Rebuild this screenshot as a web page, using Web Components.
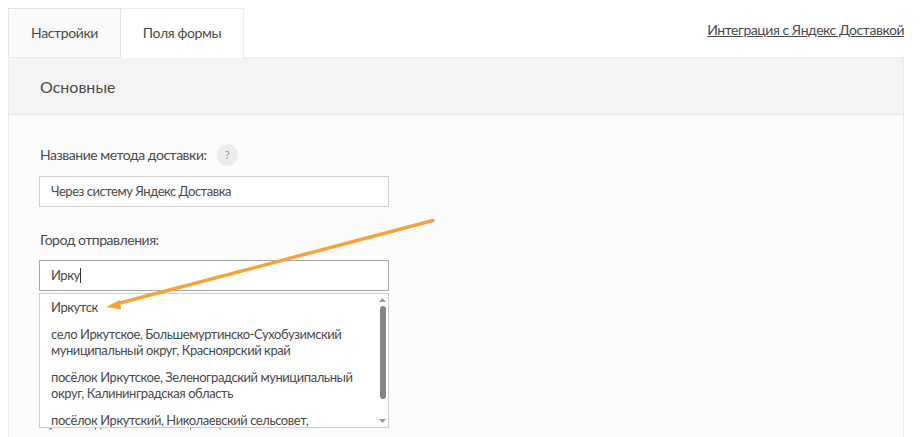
<!DOCTYPE html>
<html lang="ru"><head><meta charset="utf-8"><style>
html,body{margin:0;padding:0;background:#fff;overflow:hidden;height:437px}
body{font-family:Lato,"Noto Sans",sans-serif;color:#4a4a4a}
</style></head><body>
<template id="t-page"><style>
:host{display:block;position:relative;height:437px;overflow:hidden;box-sizing:border-box;padding:8px 20px 0 8px}
.top{display:flex;justify-content:space-between;align-items:flex-end;height:49px}
a{font-size:14px;letter-spacing:-.45px;color:#4a4a4a;text-decoration:underline;margin-bottom:17px;line-height:20px}
svg{position:absolute;left:0;top:0;pointer-events:none}
</style>
<div class="top"><slot name="tabs"></slot><a href="#">Интеграция с Яндекс Доставкой</a></div>
<slot></slot>
<svg width="924" height="437" viewBox="0 0 924 437"><path d="M433 220.500 L118 303.500" stroke="#f4a43b" stroke-width="3.400" stroke-linecap="round" fill="none"/><path d="M106 307 L120 300 L121 309.500 Z" fill="#f4a43b"/></svg>
</template>
<template id="t-tabs"><style>:host{display:flex;height:49px}</style><slot></slot></template>
<template id="t-tab"><style>
:host{display:flex;align-items:center;justify-content:center;box-sizing:border-box;height:50px;margin-bottom:-1px;padding-bottom:1px;font-size:14px;letter-spacing:-.38px;line-height:20px;border:1px solid #ededed;border-bottom:0;background:#fff;color:#4a4a4a;width:123px}
:host([active]){background:#fafafa;border-color:#e4e4e4;width:113px;padding-bottom:0;height:49px;margin-bottom:0}
:host(:not([active])){border-left:0}
</style><slot></slot></template>
<template id="t-panel"><style>
:host{display:block;box-sizing:border-box;height:380px;border:1px solid #ebebeb;border-bottom:0;background:#fcfcfc}
header{box-sizing:border-box;height:57px;background:#f4f4f4;border-bottom:1px solid #e8e8e8;padding:0 30px 0 31px;display:flex;align-items:center;font-size:16px;color:#4a4a4a}
.body{padding:29px 30px 0}
</style><header><slot name="title"></slot></header><div class="body"><slot></slot></div></template>
<template id="t-field"><style>
:host{display:block;width:350px;margin-bottom:23px}
label{display:flex;align-items:center;gap:10px;padding-left:1px;font-size:14px;letter-spacing:-.47px;line-height:20px;color:#4a4a4a;margin-bottom:10px}
.q{width:21px;height:22px;border-radius:50%;background:#ededed;color:#999;font-size:12px;display:flex;align-items:center;justify-content:center}
.box{box-sizing:border-box;height:31px;border:1px solid #d0d0d0;background:#fff;padding:0 11px;font-size:13px;letter-spacing:-.47px;line-height:29px;color:#4a4a4a;white-space:nowrap}
:host([focus]) .box{border-color:#a8a8a8}
.caret{display:inline-block;width:1px;height:15px;background:#333;vertical-align:-3px}
</style><label><span id="l"></span><span class="q" id="q">?</span></label><div class="box"><span id="v"></span><span class="caret" id="c"></span></div></template>
<template id="t-suggest"><style>
:host{display:block;position:relative;width:350px;height:135px;margin-top:-21px}
.frame{box-sizing:border-box;height:135px;border:1px solid #cfcfcf;background:#fff;overflow:hidden;position:relative}
.list{padding-right:12px}
.sb{position:absolute;right:0;top:0;bottom:0;width:17px}
.thumb{position:absolute;left:9px;top:12px;width:6px;height:93px;border-radius:3px;background:#868686}
.sb svg{position:absolute;left:8px}
.peek{position:absolute;left:0;top:135px}
</style><div class="frame"><div class="list"><slot></slot></div><div class="sb"><svg style="top:4px" width="7" height="4"><path d="M3.500 0L7 4H0Z" fill="#9a9a9a"/></svg><div class="thumb"></div><svg style="bottom:4px" width="7" height="4"><path d="M0 0H7L3.500 4Z" fill="#9a9a9a"/></svg></div></div>
<svg class="peek" width="200" height="3" fill="#666"><rect x="10.500" y="0" width="2" height="1.500"/><rect x="56" y="0" width="1" height="1.500"/><rect x="61.500" y="0" width="1" height="1.500"/><rect x="151" y="0" width="1" height="1.500"/><rect x="180.500" y="0" width="1" height="1.500"/></svg></template>
<template id="t-opt"><style>
:host{display:block;padding:5px 11px 6px;font-size:13px;letter-spacing:-.44px;line-height:16px;color:#4a4a4a}
</style><slot></slot></template>
<d-page>
  <d-tabs slot="tabs"><d-tab active>Настройки</d-tab><d-tab>Поля формы</d-tab></d-tabs>
  <d-panel>
    <span slot="title">Основные</span>
    <d-field label="Название метода доставки:" value="Через систему Яндекс Доставка" help></d-field>
    <d-field label="Город отправления:" value="Ирку" focus></d-field>
    <d-suggest>
      <d-opt>Иркутск</d-opt>
      <d-opt>село Иркутское, Большемуртинско-Сухобузимский муниципальный округ, Красноярский край</d-opt>
      <d-opt>посёлок Иркутское, Зеленоградский муниципальный округ, Калининградская область</d-opt>
      <d-opt>посёлок Иркутский, Николаевский сельсовет,</d-opt>
    </d-suggest>
  </d-panel>
</d-page>
<script>
function def(n,id,init){customElements.define(n,class extends HTMLElement{constructor(){super();this.attachShadow({mode:'open'}).appendChild(document.getElementById(id).content.cloneNode(true));}connectedCallback(){if(init)init(this,this.shadowRoot);}});}
def('d-page','t-page');def('d-tabs','t-tabs');def('d-tab','t-tab');def('d-panel','t-panel');def('d-suggest','t-suggest');def('d-opt','t-opt');
def('d-field','t-field',(h,s)=>{s.getElementById('l').textContent=h.getAttribute('label');s.getElementById('v').textContent=h.getAttribute('value');if(!h.hasAttribute('help'))s.getElementById('q').remove();if(!h.hasAttribute('focus'))s.getElementById('c').remove();});
</script>
</body></html>
